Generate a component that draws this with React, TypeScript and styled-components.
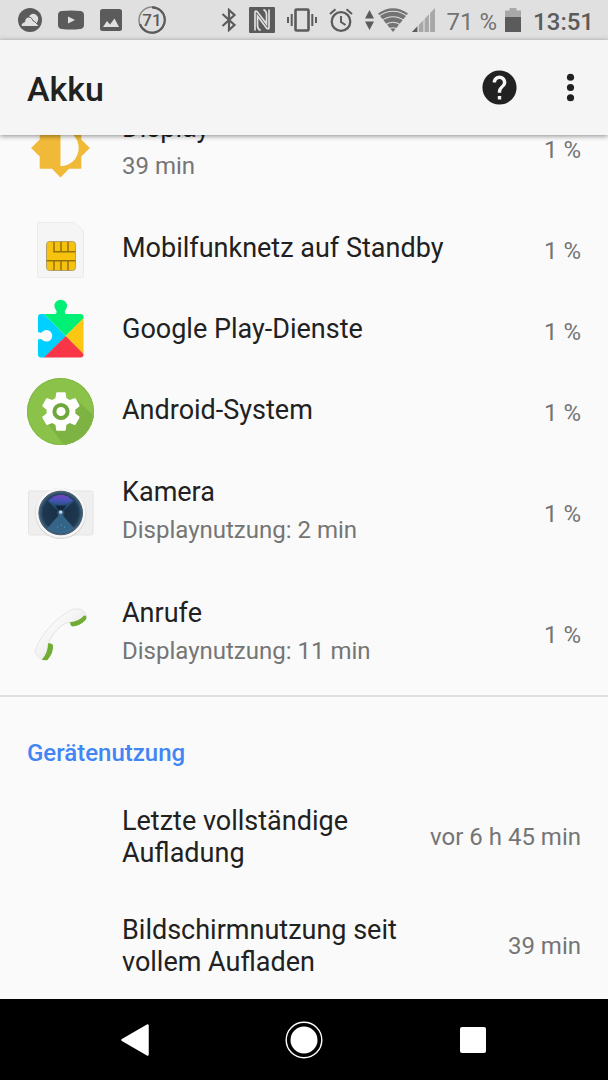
import React from "react";
import styled, { createGlobalStyle } from "styled-components";

const GlobalStyle = createGlobalStyle`
  *, *::before, *::after { box-sizing: border-box; }
  body { margin: 0; background: #fafafa; font-family: Roboto, "Liberation Sans", sans-serif; color: #212121; }
  button { font: inherit; color: inherit; background: none; border: 0; padding: 0; text-align: left; cursor: pointer; }
  ul { list-style: none; margin: 0; padding: 0; }
  h1, h2 { margin: 0; font-weight: 500; }
  svg { display: block; flex: none; }
`;

const Screen = styled.div`
  display: flex;
  flex-direction: column;
  height: 100vh;
`;

const StatusBar = styled.div`
  display: flex;
  flex: none;
  align-items: center;
  justify-content: space-between;
  height: 40px;
  padding: 0 14px 0 18px;
  background: #e0e0e0;
  color: #5b5b5b;
`;

const StatusGroup = styled.div<{ $gap: number }>`
  display: flex;
  align-items: center;
  gap: ${(p) => p.$gap}px;
`;

const StatusText = styled.span<{ $light?: boolean }>`
  font-size: 24px;
  line-height: 28px;
  padding-top: 3px;
  font-weight: ${(p) => (p.$light ? 400 : 500)};
  white-space: nowrap;
  color: ${(p) => (p.$light ? "#737373" : "#5b5b5b")};
`;

const AppBar = styled.header`
  position: relative;
  z-index: 1;
  display: flex;
  flex: none;
  align-items: center;
  justify-content: space-between;
  height: 95px;
  padding: 0 17px 0 27px;
  background: #f5f5f5;
  box-shadow: 0 1px 5px rgba(0, 0, 0, 0.45);
`;

const AppTitle = styled.h1`
  font-size: 34px;
  line-height: 40px;
  padding-top: 2px;
`;

const Actions = styled.div`
  display: flex;
  gap: 30px;
`;

const Content = styled.main`
  flex: 1;
  min-height: 0;
  overflow-y: auto;
  scrollbar-width: none;
`;

const AppList = styled.ul`
  margin-top: -47px;
  padding-bottom: 1px;
  border-bottom: 2px solid #dedede;
`;

const AppRow = styled.button<{ $tall?: boolean }>`
  display: flex;
  align-items: center;
  gap: 28px;
  width: 100%;
  height: ${(p) => (p.$tall ? 121 : 81)}px;
  padding: 0 27px;
`;

const Labels = styled.span`
  display: flex;
  flex: 1;
  flex-direction: column;
  gap: 6px;
  padding-bottom: 3px;
`;

const Title = styled.span`
  font-size: 27px;
  line-height: 32px;
`;

const Summary = styled.span`
  font-size: 24px;
  line-height: 32px;
  color: #757575;
`;

const Value = styled.span`
  font-size: 24px;
  line-height: 32px;
  white-space: nowrap;
  color: #757575;
`;

const Share = styled(Value)`
  padding-top: 2px;
`;

const SectionTitle = styled.h2`
  padding: 40px 27px 13px;
  font-size: 24px;
  line-height: 32px;
  color: #4285f4;
`;

const UsageRow = styled.li`
  display: flex;
  align-items: center;
  justify-content: space-between;
  height: 109px;
  padding: 0 27px 0 122px;
`;

const UsageTitle = styled(Title)`
  max-width: 300px;
`;

const NavBar = styled.nav`
  display: grid;
  flex: none;
  grid-template-columns: repeat(3, 1fr);
  height: 81px;
  padding: 0 50px;
  background: #000;
`;

const NavButton = styled.button`
  display: flex;
  align-items: center;
  justify-content: center;
`;

const DARK = "#5b5b5b";
const BAR = "#e0e0e0";

const WeatherIcon = () => (
  <svg width="24" height="24" viewBox="0 0 24 24">
    <circle cx="12" cy="12" r="12" fill={DARK} />
    <path d="M11 8.500a4.800 4.800 0 0 1 8.700 4.500q-.3 1.500-1.700 2.500z" fill={BAR} />
    <path d="M3 18.500c0-3 2-4.500 3.500-4.500C7 10.500 9 8.700 11.500 9.200c2 .3 2.800 2 3.500 3.500 2.500 1.200 4.500 3.300 6 5.800z" fill={BAR} stroke={DARK} strokeWidth="1" />
  </svg>
);

const VideoIcon = () => (
  <svg width="26" height="20" viewBox="0 0 26 20">
    <path d="M4 1Q13 0 22 1q4 .3 4 4v10q0 3.700-4 4-9 1-18 0-4-.3-4-4V5q0-3.700 4-4z" fill={DARK} />
    <path d="M10 6.500v7l7-3.500z" fill={BAR} />
  </svg>
);

const PictureIcon = () => (
  <svg width="22" height="22" viewBox="0 0 22 22">
    <rect width="22" height="22" rx="2.500" fill={DARK} />
    <path d="M3 18l4-6 3 3.500 4.500-6L19 18z" fill={BAR} />
  </svg>
);

const LevelIcon = () => (
  <svg width="28" height="28" viewBox="0 0 28 28">
    <circle cx="14" cy="14" r="13" fill="none" stroke="#8a8a8a" strokeWidth="1.500" />
    <path d="M14 1.300A12.700 12.700 0 1 1 2 18" fill="none" stroke={DARK} strokeWidth="2.200" />
    <text x="14" y="20" textAnchor="middle" fontFamily="Roboto, sans-serif" fontSize="17" fontWeight="500" fill={DARK}>71</text>
  </svg>
);

const BluetoothIcon = () => (
  <svg width="16" height="24" viewBox="0 0 16 24">
    <path d="M1.500 6l12 11L8 22V2l5.500 5-12 11" fill="none" stroke={DARK} strokeWidth="2.200" />
  </svg>
);

const NfcIcon = () => (
  <svg width="26" height="26" viewBox="0 0 26 26">
    <rect width="26" height="26" rx="1" fill={DARK} />
    <path d="M6 23.500V5.500Q6 3 8.500 5L17.500 17V7.500Q17.500 4 14.500 2.500M20 2.500v18q0 2.500-2.500.5L8.500 9v9.500q0 3.500 3 5" fill="none" stroke={BAR} strokeWidth="1.700" />
  </svg>
);

const VibrateIcon = () => (
  <svg width="30" height="24" viewBox="0 0 30 24">
    <rect x="8.500" y="1.500" width="13" height="21" rx="1" fill="none" stroke={DARK} strokeWidth="2.600" />
    <path d="M1 9v6M4.700 6v12M25.300 6v12M29 9v6" stroke={DARK} strokeWidth="2" />
  </svg>
);

const AlarmIcon = () => (
  <svg width="24" height="24" viewBox="0 0 24 24">
    <circle cx="12" cy="13.500" r="9.300" fill="none" stroke={DARK} strokeWidth="2.300" />
    <path d="M12 8v6l4.500 3M1 6l5.500-4.700M23 6l-5.500-4.700" fill="none" stroke={DARK} strokeWidth="2" />
  </svg>
);

const TrafficIcon = () => (
  <svg width="9" height="20" viewBox="0 0 9 20">
    <path d="M4.500 0L9 8.500H0zM4.500 20L9 11.500H0z" fill={DARK} />
  </svg>
);

const WifiIcon = () => (
  <svg width="30" height="24" viewBox="0 0 30 24">
    <path d="M15 24L0 5.500Q15-5 30 5.500z" fill="#737373" />
    <path d="M0 8.500Q15-2 30 8.500M3 13Q15 4.500 27 13M6.500 17.500Q15 11 23.500 17.500M10 21.500Q15 18 20 21.500" fill="none" stroke={BAR} strokeWidth="1.200" />
  </svg>
);

const SignalIcon = () => (
  <svg width="23" height="24" viewBox="0 0 23 24">
    <path d="M0 24L23 0v24z" fill="#a8a8a8" />
    <path d="M0 24l5.500-5.700V24z" fill={DARK} />
    <path d="M6.200 0v24M12 0v24M17.500 0v24" stroke={BAR} strokeWidth="1.200" />
  </svg>
);

const BatteryIcon = () => (
  <svg width="16" height="24" viewBox="0 0 16 24">
    <path d="M0 2.500h4.500V0h7v2.500H16V10H0z" fill="#a8a8a8" />
    <path d="M0 9h16v15H0z" fill={DARK} />
  </svg>
);

const HelpIcon = () => (
  <svg width="41" height="41" viewBox="0 0 24 24" fill="#212121">
    <path d="M12 2C6.480 2 2 6.480 2 12s4.480 10 10 10 10-4.480 10-10S17.520 2 12 2zm1 17h-2v-2h2v2zm2.070-7.750l-.9.92C13.450 12.900 13 13.500 13 15h-2v-.5c0-1.100.45-2.100 1.170-2.830l1.240-1.260c.37-.36.59-.86.59-1.410 0-1.100-.9-2-2-2s-2 .9-2 2H8c0-2.210 1.790-4 4-4s4 1.790 4 4c0 .88-.36 1.680-.93 2.250z" />
  </svg>
);

const MoreIcon = () => (
  <svg width="41" height="41" viewBox="0 0 24 24" fill="#212121">
    <circle cx="12" cy="6" r="2.100" />
    <circle cx="12" cy="12" r="2.100" />
    <circle cx="12" cy="18" r="2.100" />
  </svg>
);

const AppIcon = ({ children }: { children: React.ReactNode }) => (
  <svg width="67" height="67" viewBox="0 0 67 67" aria-hidden="true">{children}</svg>
);

const DisplayIcon = () => (
  <AppIcon>
    <path transform="translate(2.300 1.800) scale(2.600)" fill="#f0b937" d="M20 15.310L23.310 12 20 8.690V4h-4.690L12 .69 8.690 4H4v4.690L.69 12 4 15.310V20h4.690L12 23.310 15.310 20H20v-4.690zM12 19V5c3.900 0 7 3.100 7 7s-3.100 7-7 7z" />
  </AppIcon>
);

const SimIcon = () => (
  <AppIcon>
    <path d="M12 6.500h36l8.500 8.500v45q0 1.500-1.500 1.500H12q-1.500 0-1.500-1.500V8q0-1.500 1.500-1.500z" fill="#f5f5f5" stroke="#ebebeb" />
    <rect x="19.500" y="25.500" width="29" height="29" rx="3" fill="#f6c20e" stroke="#b3a069" />
    <path d="M27 26v9.700h21.500M34 26v9.700M41 26v9.700M19.500 44.700h29M27 44.700v9.500M34 44.700v9.500M41 44.700v9.500" fill="none" stroke="#94720a" strokeWidth="1.500" />
  </AppIcon>
);

const PlayServicesIcon = () => (
  <AppIcon>
    <clipPath id="piece"><rect x="11" y="17" width="45.500" height="43.500" rx="3" /></clipPath>
    <g clipPath="url(#piece)">
      <path d="M11 17h6l21.700 22L17 61h-6z" fill="#00d0ff" />
      <path d="M16.500 16.500H57V21L38.700 39z" fill="#00f076" />
      <path d="M57 20.500V58L38.700 39z" fill="#fbc712" />
      <path d="M16.500 61l22.200-22L57 57.500V61z" fill="#f93647" />
    </g>
    <circle cx="33.700" cy="9" r="6.300" fill="#00f076" />
    <path d="M29.500 13h8.400q-.8 2.500.8 4.200H28.700q1.600-1.700.8-4.200z" fill="#00f076" />
    <circle cx="19.500" cy="38.800" r="5.800" fill="#fafafa" />
    <path d="M10 34.500q3 2 6 .5v7.600q-3-1.500-6 .4z" fill="#fafafa" />
  </AppIcon>
);

const SystemIcon = () => (
  <AppIcon>
    <clipPath id="disc"><circle cx="33.500" cy="33.500" r="33.500" /></clipPath>
    <g clipPath="url(#disc)">
      <rect width="67" height="67" fill="#8bc34a" />
      <path d="M20 45l30-23 25 24v30H44z" fill="#7db343" />
    </g>
    <circle cx="33.500" cy="33.500" r="33" fill="none" stroke="#80b843" />
    <path transform="translate(10.900 10.500) scale(1.920)" fill="#fff" d="M19.430 12.980c.04-.32.07-.64.07-.98s-.03-.66-.07-.98l2.110-1.650c.19-.15.24-.42.12-.64l-2-3.460c-.12-.22-.39-.3-.61-.22l-2.490 1c-.52-.4-1.080-.73-1.690-.98l-.38-2.650C14.460 2.180 14.250 2 14 2h-4c-.25 0-.46.18-.49.42l-.38 2.650c-.61.25-1.170.59-1.690.98l-2.490-1c-.23-.09-.49 0-.61.22l-2 3.460c-.13.22-.07.49.12.64l2.110 1.650c-.04.32-.07.65-.07.98s.03.66.07.98l-2.110 1.650c-.19.15-.24.42-.12.64l2 3.460c.12.22.39.3.61.22l2.490-1c.52.4 1.080.73 1.690.98l.38 2.650c.03.24.24.42.49.42h4c.25 0 .46-.18.49-.42l.38-2.650c.61-.25 1.170-.59 1.690-.98l2.490 1c.23.09.49 0 .61-.22l2-3.460c.12-.22.07-.49-.12-.64l-2.110-1.650z" />
    <circle cx="34" cy="33.500" r="6.600" fill="#fff" stroke="#6fa83a" strokeWidth="4" />
  </AppIcon>
);

const CameraIcon = () => (
  <AppIcon>
    <defs>
      <radialGradient id="glass">
        <stop offset="0" stopColor="#5d87a5" />
        <stop offset=".2" stopColor="#1b3046" />
        <stop offset=".8" stopColor="#1c3850" />
        <stop offset="1" stopColor="#456680" />
      </radialGradient>
      <linearGradient id="coating" x1="0" y1="0" x2="0" y2="1">
        <stop offset="0" stopColor="#7a3fc4" />
        <stop offset=".5" stopColor="#4653b8" />
        <stop offset="1" stopColor="#28507a" />
      </linearGradient>
    </defs>
    <rect x="1.500" y="12" width="64.500" height="44" rx="2" fill="#efefef" stroke="#e4e4e4" />
    <circle cx="33.700" cy="34.500" r="25.500" fill="#d5d5d5" />
    <circle cx="33.700" cy="33.800" r="25" fill="#f6f6f6" />
    <circle cx="33.700" cy="34" r="21.800" fill="url(#glass)" stroke="#49596b" />
    <path d="M33.700 34L20 49.500a21.500 21.500 0 0 0 27.400 0z" fill="#3a6c92" opacity=".85" />
    <path d="M33.700 34L21 22.500Q33.700 9 46.500 22.500z" fill="#28507a" />
    <path d="M33.700 27L21 22Q33.700 9.500 46.500 22z" fill="url(#coating)" />
    <path d="M33.700 34L28 26.500h11.500z" fill="#13283d" />
    <circle cx="33.700" cy="33" r="1.800" fill="#b5d9ec" />
    <path d="M30 48h1M33.500 46h1M37 48h1" stroke="#3fa5d8" />
  </AppIcon>
);

const PhoneIcon = () => (
  <AppIcon>
    <defs>
      <linearGradient id="handset" x1="0" y1="0" x2="1" y2="1">
        <stop offset="0" stopColor="#e4e4e4" />
        <stop offset=".35" stopColor="#f8f8f8" />
        <stop offset="1" stopColor="#dadada" />
      </linearGradient>
    </defs>
    <path d="M15.500 59.500q-1 .5-2-.6C9.500 56 7.500 52 8.600 49.500 13 38 22 24 40 12.300 45 8.500 53 7.500 56.500 11c1.500 1.500 3 3.500 3 5.500L43.500 25l-.8-2.800C36 22.500 25 33 21.800 43.500q3 0 4 1.500z" fill="url(#handset)" stroke="#dedede" strokeWidth=".8" />
    <path d="M43 22.300q9-.8 14-6.800 2.200-.2 2.500 1.800 0 2-1.200 3-5.500 6-13.300 6.300-1.600-1.300-2-4.300z" fill="#6fac33" />
    <path d="M21 43.300q3.500-.2 5 1.700.7 7.700-5.500 15-2.800.6-5.700-.2 6.200-6.500 6.200-16.500z" fill="#6fac33" />
  </AppIcon>
);

const apps = [
  { name: "Display", summary: "39 min", Icon: DisplayIcon },
  { name: "Mobilfunknetz auf Standby", Icon: SimIcon },
  { name: "Google Play-Dienste", Icon: PlayServicesIcon },
  { name: "Android-System", Icon: SystemIcon },
  { name: "Kamera", summary: "Displaynutzung: 2 min", Icon: CameraIcon },
  { name: "Anrufe", summary: "Displaynutzung: 11 min", Icon: PhoneIcon },
];

const usage = [
  { name: "Letzte vollständige Aufladung", value: "vor 6 h 45 min" },
  { name: "Bildschirmnutzung seit vollem Aufladen", value: "39 min" },
];

export default function App() {
  return (
    <Screen>
      <GlobalStyle />
      <StatusBar>
        <StatusGroup $gap={16}>
          <WeatherIcon />
          <VideoIcon />
          <PictureIcon />
          <LevelIcon />
        </StatusGroup>
        <StatusGroup $gap={12}>
          <BluetoothIcon />
          <NfcIcon />
          <VibrateIcon />
          <AlarmIcon />
          <StatusGroup $gap={4}>
            <TrafficIcon />
            <WifiIcon />
            <SignalIcon />
          </StatusGroup>
          <StatusGroup $gap={8}>
            <StatusText $light>71 %</StatusText>
            <BatteryIcon />
          </StatusGroup>
          <StatusText>13:51</StatusText>
        </StatusGroup>
      </StatusBar>
      <AppBar>
        <AppTitle>Akku</AppTitle>
        <Actions>
          <button type="button" aria-label="Hilfe"><HelpIcon /></button>
          <button type="button" aria-label="Weitere Optionen"><MoreIcon /></button>
        </Actions>
      </AppBar>
      <Content>
        <AppList>
          {apps.map(({ name, summary, Icon }) => (
            <li key={name}>
              <AppRow type="button" $tall={Boolean(summary)}>
                <Icon />
                <Labels>
                  <Title>{name}</Title>
                  {summary && <Summary>{summary}</Summary>}
                </Labels>
                <Share>1 %</Share>
              </AppRow>
            </li>
          ))}
        </AppList>
        <section>
          <SectionTitle>Gerätenutzung</SectionTitle>
          <ul>
            {usage.map(({ name, value }) => (
              <UsageRow key={name}>
                <UsageTitle>{name}</UsageTitle>
                <Value>{value}</Value>
              </UsageRow>
            ))}
          </ul>
        </section>
      </Content>
      <NavBar>
        <NavButton type="button" aria-label="Zurück">
          <svg width="28" height="32" viewBox="0 0 28 32">
            <path d="M1.500 16L26.500 1.500v29z" fill="#fff" stroke="#fff" strokeWidth="2.500" strokeLinejoin="round" />
          </svg>
        </NavButton>
        <NavButton type="button" aria-label="Startseite">
          <svg width="38" height="38" viewBox="0 0 38 38">
            <circle cx="19" cy="19" r="17.800" fill="none" stroke="#fff" strokeWidth="1.400" />
            <circle cx="19" cy="19" r="13.500" fill="#fff" />
          </svg>
        </NavButton>
        <NavButton type="button" aria-label="Letzte Apps">
          <svg width="26" height="26" viewBox="0 0 26 26">
            <rect width="26" height="26" rx="2" fill="#fff" />
          </svg>
        </NavButton>
      </NavBar>
    </Screen>
  );
}
